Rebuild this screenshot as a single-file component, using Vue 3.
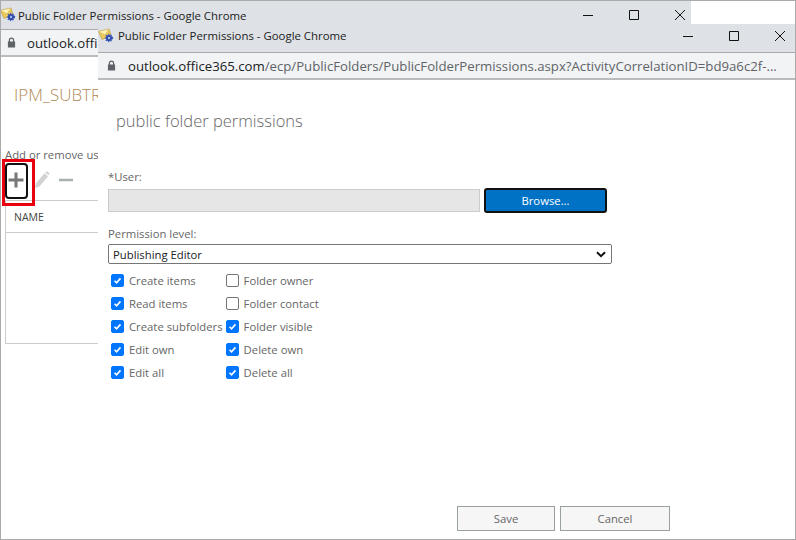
<template>
  <div class="desktop">
    <!-- window behind -->
    <section class="window back">
      <header class="titlebar">
        <svg class="app-icon" viewBox="0 0 16 16"><use href="#mail-gear" /></svg>
        <span class="title-text">Public Folder Permissions - Google Chrome</span>
        <div class="controls">
          <svg viewBox="0 0 12 12"><path d="M1 6.500h10" /></svg>
          <svg viewBox="0 0 12 12"><path d="M1.500 1.500h9v9h-9z" /></svg>
          <svg viewBox="0 0 12 12"><path d="M1 1l10 10M11 1L1 11" /></svg>
        </div>
      </header>
      <div class="addressbar">
        <svg class="lock" viewBox="0 0 10 12"><path d="M2 5V3.500a3 3 0 0 1 6 0V5h1v6.500H1V5zm1.300 0h3.400V3.500a1.700 1.700 0 0 0-3.400 0z" /></svg>
        <span class="url dark">outlook.office365.com</span>
      </div>
      <div class="back-body">
        <h1 class="subtree">IPM_SUBTREE</h1>
        <p class="hint">Add or remove users</p>
        <div class="toolbar">
          <span class="add-focus">
            <svg viewBox="0 0 16 16"><path d="M8 0.500v15M0.500 8h15" /></svg>
          </span>
          <svg class="pencil" viewBox="0 0 16 18">
            <path d="M1 17l0.800-4.500L10.500 2.300l3.600 3L5.400 15.500z" />
            <path d="M11.300 1.400l0.600-0.600a1.500 1.500 0 0 1 2 0l1 0.900a1.500 1.500 0 0 1 0.100 2l-0.500 0.600z" />
          </svg>
          <svg class="minus" viewBox="0 0 14 4"><path d="M0 2h14" /></svg>
        </div>
        <div class="users-table">
          <div class="users-head">NAME</div>
        </div>
      </div>
    </section>

    <!-- red annotation round the add button -->
    <div class="callout"></div>

    <!-- window in front -->
    <section class="window front">
      <header class="titlebar">
        <svg class="app-icon" viewBox="0 0 16 16">
          <defs>
            <g id="mail-gear">
              <path d="M0.500 3.500L11 1l2 6.500-9 4z" fill="#ecca5a" stroke="#b59a3c" stroke-width=".6" />
              <path d="M0.500 3.500l6.500 3.300L11 1z" fill="#fff3b8" stroke="#cdb45a" stroke-width=".5" />
              <circle cx="11" cy="10" r="3.100" fill="#2f4aa8" />
              <circle cx="11" cy="10" r="3.600" fill="none" stroke="#3f5fc0" stroke-width="1.200" stroke-dasharray="1.300 1.300" />
              <circle cx="11" cy="10" r="1.200" fill="#a9bcf0" />
            </g>
          </defs>
          <use href="#mail-gear" />
        </svg>
        <span class="title-text">Public Folder Permissions - Google Chrome</span>
        <div class="controls">
          <svg viewBox="0 0 12 12"><path d="M1 6.500h10" /></svg>
          <svg viewBox="0 0 12 12"><path d="M1.500 1.500h9v9h-9z" /></svg>
          <svg viewBox="0 0 12 12"><path d="M1 1l10 10M11 1L1 11" /></svg>
        </div>
      </header>
      <div class="addressbar">
        <svg class="lock" viewBox="0 0 10 12"><path d="M2 5V3.500a3 3 0 0 1 6 0V5h1v6.500H1V5zm1.300 0h3.400V3.500a1.700 1.700 0 0 0-3.400 0z" /></svg>
        <span class="url"><span class="dark">outlook.office365.com</span>/ecp/PublicFolders/PublicFolderPermissions.aspx?ActivityCorrelationID=bd9a6c2f-...</span>
      </div>

      <div class="dialog">
        <h2 class="dialog-title">public folder permissions</h2>

        <label class="field-label user-label">*User:</label>
        <div class="user-row">
          <div class="user-input"></div>
          <button class="browse">Browse...</button>
        </div>

        <label class="field-label level-label">Permission level:</label>
        <div class="select">
          <span>Publishing Editor</span>
          <svg viewBox="0 0 10 7"><path d="M1 1.200l4 4 4-4" /></svg>
        </div>

        <div class="perms">
          <div v-for="perm in permissions" :key="perm.name" class="perm">
            <span class="box" :class="{ on: perm.on }">
              <svg v-if="perm.on" viewBox="0 0 13 13"><path d="M3 6.800l2.400 2.400L10 4" /></svg>
            </span>
            <span>{{ perm.name }}</span>
          </div>
        </div>

        <div class="actions">
          <button class="plain save">Save</button>
          <button class="plain cancel">Cancel</button>
        </div>
      </div>
    </section>
  </div>
</template>

<script setup>
// column-wise, so the grid fills top to bottom
const permissions = [
  { name: "Create items", on: true },
  { name: "Read items", on: true },
  { name: "Create subfolders", on: true },
  { name: "Edit own", on: true },
  { name: "Edit all", on: true },
  { name: "Folder owner", on: false },
  { name: "Folder contact", on: false },
  { name: "Folder visible", on: true },
  { name: "Delete own", on: true },
  { name: "Delete all", on: true },
];
</script>

<style>
html,
body {
  margin: 0;
  background: #fff;
}
</style>

<style scoped>
* {
  box-sizing: border-box;
}

.desktop {
  position: relative;
  width: 796px;
  height: 540px;
  overflow: hidden;
  background: #fff;
  border: 1px solid #aaa;
  font-family: "Open Sans", "Noto Sans", sans-serif;
  color: #666;
}

.window {
  position: absolute;
  background: #fff;
}

.back {
  left: 0;
  top: 0;
  width: 690px;
  height: 538px;
}

.front {
  left: 97px;
  top: 23px;
  width: 697px;
  height: 515px;
}

.titlebar {
  display: flex;
  align-items: center;
  height: 29px;
  background: #dee1e6;
  border-bottom: 1px solid #aaa;
  font-size: 11.400px;
  color: #222;
}

.front .titlebar {
  padding-bottom: 5px;
}

.app-icon {
  width: 16px;
  height: 16px;
  flex: none;
  margin-left: -1px;
  margin-right: 2px;
}

.front .app-icon {
  margin-left: 0;
  margin-right: 4px;
}

.controls {
  display: flex;
  align-items: center;
  gap: 34px;
  margin-left: auto;
  margin-right: 5px;
}

.front .controls {
  margin-right: 9px;
}

.controls svg {
  width: 12px;
  height: 12px;
  fill: none;
  stroke: #111;
  stroke-width: 1;
}

.addressbar {
  display: flex;
  align-items: center;
  height: 27px;
  background: #f1f3f4;
  border-bottom: 2px solid #bbb;
  padding-left: 6px;
  font-size: 13.200px;
  color: #5f6368;
  white-space: nowrap;
}

.front .addressbar {
  padding-left: 9px;
}

.lock {
  width: 9px;
  height: 11px;
  flex: none;
  fill: #5f6368;
  margin-right: 11px;
}

.front .lock {
  margin-right: 12px;
}

.dark {
  color: #202124;
}

.back-body {
  padding: 0 0 0 4px;
}

.subtree {
  margin: 26px 0 0 9px;
  font-size: 17px;
  font-weight: 300;
  color: #b08a58;
  line-height: 24px;
}

.hint {
  margin: 40px 0 0;
  font-size: 11.300px;
  line-height: 16px;
}

.toolbar {
  display: flex;
  align-items: center;
  gap: 6px;
  height: 36px;
  margin-bottom: 1px;
}

.add-focus {
  display: flex;
  align-items: center;
  justify-content: center;
  width: 23px;
  height: 36px;
  padding: 0 2px 3px 0;
  border: 2px solid #111;
  border-radius: 4px;
}

.add-focus svg {
  width: 16px;
  height: 16px;
  flex: none;
  fill: none;
  stroke: #777;
  stroke-width: 3;
}

.pencil {
  width: 16px;
  height: 18px;
  margin-bottom: 3px;
  fill: #d2d2d2;
}

.minus {
  width: 14px;
  height: 4px;
  margin-left: 3px;
  margin-bottom: 3px;
  stroke: #a9b0b0;
  stroke-width: 2.500;
}

.users-table {
  height: 144px;
  border: 1px solid #ccc;
  border-right: none;
}

.users-head {
  height: 32px;
  border-bottom: 1px solid #ccc;
  padding-left: 8px;
  font-size: 10.500px;
  line-height: 32px;
  color: #444;
}

.callout {
  position: absolute;
  left: 1px;
  top: 158px;
  width: 33px;
  height: 47px;
  border: 3px solid #e8000f;
}

.dialog {
  height: 459px;
  padding: 0 0 0 10px;
  position: relative;
  display: flex;
  flex-direction: column;
}

.dialog-title {
  margin: 29px 0 0 8px;
  font-size: 16.500px;
  font-weight: 300;
  line-height: 24px;
  color: #666;
}

.field-label {
  font-size: 11.300px;
  line-height: 16px;
}

.user-label {
  margin-top: 36px;
}

.user-row {
  display: flex;
  align-items: center;
  gap: 4px;
  margin-top: 3px;
}

.user-input {
  width: 372px;
  height: 23px;
  background: #e6e6e6;
  border: 1px solid #ccc;
}

.browse {
  width: 123px;
  height: 25px;
  background: #0072c6;
  border: 2px solid #111;
  border-radius: 3px;
  color: #fff;
  font: 11.300px "Open Sans", sans-serif;
}

.level-label {
  margin-top: 13px;
}

.select {
  display: flex;
  align-items: center;
  justify-content: space-between;
  width: 504px;
  height: 20px;
  margin-top: 2px;
  padding: 0 5px 0 4px;
  border: 1px solid #767676;
  border-radius: 2px;
  font-size: 11.300px;
  color: #222;
}

.select svg {
  width: 10px;
  height: 7px;
  fill: none;
  stroke: #111;
  stroke-width: 2;
}

.perms {
  display: grid;
  grid-template-rows: repeat(5, 23px);
  grid-auto-flow: column;
  grid-auto-columns: max-content;
  margin: 5px 0 0 3px;
  column-gap: 3px;
}

.perm {
  display: flex;
  align-items: center;
  gap: 5px;
  font-size: 11.300px;
}

.box {
  display: flex;
  width: 13px;
  height: 13px;
  border: 1px solid #767676;
  border-radius: 2px;
  background: #fff;
}

.box.on {
  background: #0075ff;
  border-color: #0075ff;
}

.box svg {
  width: 11px;
  height: 11px;
  fill: none;
  stroke: #fff;
  stroke-width: 2;
}

.actions {
  display: flex;
  gap: 5px;
  margin-top: auto;
  margin-left: 349px;
  margin-bottom: 8px;
}

.plain {
  width: 98px;
  height: 25px;
  background: #f6f6f6;
  border: 1px solid #98a0a0;
  color: #666;
  font: 11.300px "Open Sans", sans-serif;
}

.cancel {
  width: 110px;
}
</style>
